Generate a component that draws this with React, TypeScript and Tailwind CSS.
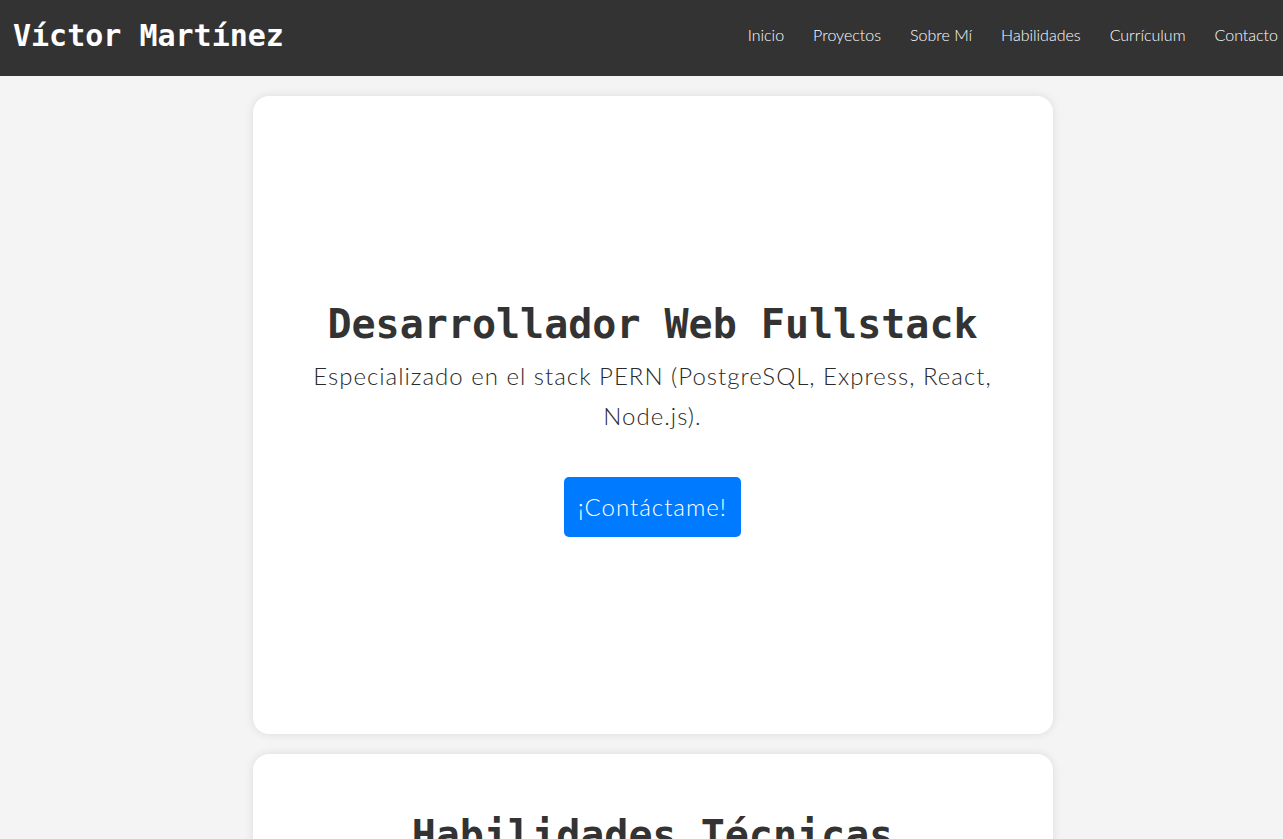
const navItems = ['Inicio', 'Proyectos', 'Sobre Mí', 'Habilidades', 'Currículum', 'Contacto'];

const mono = { fontFamily: '"DejaVu Sans Mono", "Liberation Mono", monospace' };

export default function App() {
    return (
        <div className="min-h-screen overflow-hidden bg-[#f4f4f4] text-[#333]" style={{ fontFamily: 'Lato, "Noto Sans", sans-serif' }}>
            <header className="flex h-[76px] items-center justify-between bg-[#333] pb-[6px] pl-[13px] pr-[5px]">
                <h1 className="text-[30px] font-bold text-white" style={mono}>
                    Víctor Martínez
                </h1>
                <nav className="flex items-center gap-[29px]">
                    {navItems.map((item) => (
                        <a key={item} href="#" className="text-[16px] font-light text-white">
                            {item}
                        </a>
                    ))}
                </nav>
            </header>

            <main className="flex flex-col items-center gap-5 pl-[22px] pt-5">
                <section className="flex h-[638px] w-[800px] flex-col items-center justify-center rounded-2xl bg-white px-[50px] pt-[6px] text-center shadow-[0_0_10px_rgba(0,0,0,0.1)]">
                    <h2 className="text-[40px] font-bold leading-[48px]" style={mono}>
                        Desarrollador Web Fullstack
                    </h2>
                    <p className="mt-[8px] text-[24px] font-light leading-[40px] tracking-[1px] text-[#2a2a2a]">
                        Especializado en el stack PERN (PostgreSQL, Express, React,
                        <br />
                        Node.js).
                    </p>
                    <button className="mt-[41px] rounded-[5px] bg-[#007bff] px-[14px] py-[12px] text-[24px] font-light leading-[36px] tracking-[1px] text-white">
                        ¡Contáctame!
                    </button>
                </section>

                <section className="flex h-[400px] w-[800px] flex-col items-center rounded-2xl bg-white px-[50px] pt-[57px] text-center shadow-[0_0_10px_rgba(0,0,0,0.1)]">
                    <h2 className="text-[40px] font-bold leading-[48px]" style={mono}>
                        Habilidades Técnicas
                    </h2>
                </section>
            </main>
        </div>
    );
}
